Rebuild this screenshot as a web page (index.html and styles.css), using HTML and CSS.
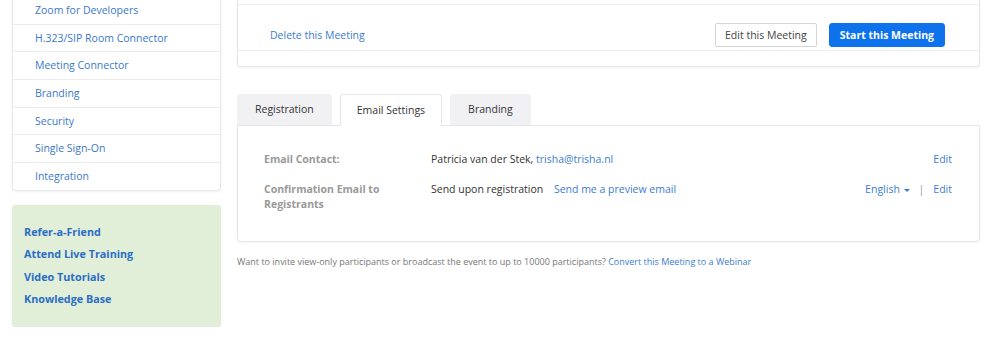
FILE: index.html
```html
<!DOCTYPE html>
<html lang="en">
<head>
  <meta charset="UTF-8">
  <title>Meeting Settings</title>
  <link rel="stylesheet" href="styles.css">
</head>
<body>
<div class="page">
  <div class="side">
    <ul class="side-menu">
      <li><a href="#">Zoom for Developers</a></li>
      <li><a href="#">H.323/SIP Room Connector</a></li>
      <li><a href="#">Meeting Connector</a></li>
      <li><a href="#">Branding</a></li>
      <li><a href="#">Security</a></li>
      <li><a href="#">Single Sign-On</a></li>
      <li><a href="#">Integration</a></li>
    </ul>
    <div class="side-help">
      <a href="#">Refer-a-Friend</a>
      <a href="#">Attend Live Training</a>
      <a href="#">Video Tutorials</a>
      <a href="#">Knowledge Base</a>
    </div>
  </div>

  <div class="main">
    <div class="card">
      <div class="card-top"></div>
      <div class="card-actions">
        <a href="#" class="link">Delete this Meeting</a>
        <div class="btns">
          <button class="btn">Edit this Meeting</button>
          <button class="btn btn-primary">Start this Meeting</button>
        </div>
      </div>
      <div class="card-bottom"></div>
    </div>

    <div class="tabs">
      <div class="tab">Registration</div>
      <div class="tab active">Email Settings</div>
      <div class="tab">Branding</div>
    </div>
    <div class="panel">
      <div class="row">
        <div class="label">Email Contact:</div>
        <div class="value">Patricia van der Stek, <a href="#" class="link">trisha@trisha.nl</a></div>
        <div class="ops"><a href="#" class="link">Edit</a></div>
      </div>
      <div class="row">
        <div class="label">Confirmation Email to Registrants</div>
        <div class="value">Send upon registration <a href="#" class="link preview">Send me a preview email</a></div>
        <div class="ops">
          <a href="#" class="link">English <span class="caret"></span></a>
          <span class="sep">|</span>
          <a href="#" class="link">Edit</a>
        </div>
      </div>
    </div>
    <p class="note">Want to invite view-only participants or broadcast the event to up to 10000 participants? <a href="#" class="link">Convert this Meeting to a Webinar</a></p>
  </div>
</div>
</body>
</html>
```

FILE: styles.css
```css
body {
  margin: 0;
  background: #fff;
  color: #333;
  font-family: "Open Sans", "Liberation Sans", sans-serif;
  font-size: 10.5px;
}
a { text-decoration: none; }
.link { color: #3b7dd1; }

.page {
  display: flex;
  gap: 16px;
  padding: 0 20px 0 12px;
  margin-top: -2px;
}

/* sidebar */
.side {
  width: 209px;
  flex-shrink: 0;
}
.side-menu {
  list-style: none;
  margin: 0;
  padding: 0;
  border: 1px solid #e8e8e8;
  border-top: none;
  border-radius: 0 0 4px 4px;
  box-shadow: 0 1px 3px rgba(0,0,0,0.06);
}
.side-menu li {
  height: 26.7px;
  line-height: 26.7px;
  padding-left: 22px;
  border-bottom: 1px solid #ececec;
}
.side-menu li:first-child {
  height: 25.7px;
  line-height: 24.7px;
}
.side-menu li:last-child { border-bottom: none; }
.side-menu a { color: #3a78c9; }
.side-help {
  margin-top: 14px;
  background: #e1efd9;
  border-radius: 3px;
  padding: 16px 12px 16px;
  display: flex;
  flex-direction: column;
  box-shadow: 0 1px 3px rgba(0,0,0,0.05);
}
.side-help a {
  color: #2b6dc5;
  font-weight: bold;
  font-size: 10.8px;
  line-height: 22.5px;
}

/* main */
.main {
  width: 743px;
}
.card {
  border: 1px solid #e6e6e6;
  border-top: none;
  border-radius: 0 0 4px 4px;
  box-shadow: 0 1px 3px rgba(0,0,0,0.05);
}
.card-top {
  height: 6px;
  border-bottom: 1px solid #efefef;
}
.card-actions {
  display: flex;
  justify-content: space-between;
  align-items: center;
  padding: 18px 34px 3px 32px;
  border-bottom: 1px solid #efefef;
}
.btns {
  display: flex;
  gap: 12px;
}
.btn {
  font-family: inherit;
  font-size: 10.5px;
  height: 24px;
  padding: 0 9px;
  background: #fff;
  color: #444;
  border: 1px solid #d4d4d4;
  border-radius: 2px;
}
.btn-primary {
  background: #0e72ed;
  border-color: #0e72ed;
  color: #fff;
  font-weight: bold;
  padding: 0 10px;
  border-radius: 3px;
}
.card-bottom { height: 15px; }

.tabs {
  display: flex;
  gap: 8px;
  margin-top: 27px;
}
.tab {
  height: 31px;
  line-height: 31px;
  padding: 0 18px;
  background: #f1f1f4;
  color: #333;
  border-radius: 3px 3px 0 0;
}
.tab.active {
  background: #fff;
  border: 1px solid #e6e6e6;
  border-bottom: none;
  padding: 0 16px;
  height: 31px;
  line-height: 30px;
  margin-bottom: -1px;
  position: relative;
}
.panel {
  border: 1px solid #e6e6e6;
  border-radius: 0 0 4px 4px;
  padding: 26px 27px 29px 26px;
  box-shadow: 0 1px 3px rgba(0,0,0,0.05);
}
.row {
  display: flex;
  line-height: 15px;
}
.row + .row { margin-top: 15px; }
.label {
  width: 140px;
  margin-right: 27px;
  color: #999;
  font-weight: bold;
}
.value { flex: 1; }
.preview { margin-left: 8px; }
.ops {
  display: flex;
  gap: 9px;
  align-items: flex-start;
}
.sep { color: #999; }
.caret {
  display: inline-block;
  width: 0;
  height: 0;
  margin-left: 1px;
  vertical-align: middle;
  border-left: 3px solid transparent;
  border-right: 3px solid transparent;
  border-top: 3px solid #3b7dd1;
}
.note {
  margin: 13px 0 0;
  font-size: 9px;
  color: #777;
}
```
